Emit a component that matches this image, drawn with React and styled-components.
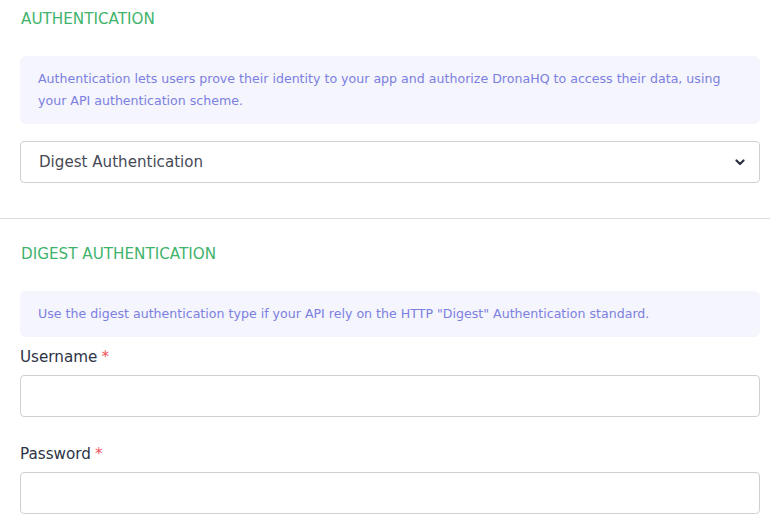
import React from 'react';
import styled, { createGlobalStyle } from 'styled-components';

const Global = createGlobalStyle`
  body {
    margin: 0;
    background: #ffffff;
    font-family: "DejaVu Sans", "Noto Sans", sans-serif;
  }
`

const Page = styled.div`
  width: 770px;
  padding-top: 9px;
`

const Section = styled.section`
  padding: 0 10px 0 20px;
  border-top: ${p => (p.divided ? '1px solid #dedede' : 'none')};
  padding-top: ${p => (p.divided ? '25px' : '0')};
  padding-bottom: ${p => (p.divided ? '0' : '35px')};
`

const Heading = styled.h2`
  margin: 0 0 27px 1px;
  font-size: 15.2px;
  line-height: 20px;
  font-weight: 400;
  color: #3fb36b;
`

const Note = styled.div`
  background: #f4f5fd;
  border-radius: 6px;
  padding: 12px 18px;
  font-size: 12.6px;
  line-height: 22px;
  color: #7d80e0;
`

const SelectBox = styled.div`
  margin-top: 17px;
  height: 42px;
  box-sizing: border-box;
  border: 1px solid #d0d0d0;
  border-radius: 4px;
  display: flex;
  align-items: center;
  justify-content: space-between;
  padding: 0 14px 0 18px;
  font-size: 15.1px;
  color: #464a55;
`

const Field = styled.div`
  margin-top: ${p => p.gap}px;
`

const Label = styled.label`
  display: block;
  font-size: 15.2px;
  line-height: 20px;
  color: #2c3345;
  margin-bottom: 8px;
`

const Star = styled.span`
  color: #f0505a;
  margin-left: 4px;
`

const Input = styled.input`
  display: block;
  width: 100%;
  height: 42px;
  box-sizing: border-box;
  border: 1px solid #d0d0d0;
  border-radius: 4px;
  outline: none;
`

const Chevron = () => (
  <svg width="10" height="7" viewBox="0 0 10 7">
    <path d="M1.5 1.5 L5 5 L8.5 1.5" fill="none" stroke="#2c3345" strokeWidth="2.2" strokeLinecap="round" strokeLinejoin="round" />
  </svg>
)

export default function App() {
  return (
    <Page>
      <Global />
      <Section>
        <Heading>AUTHENTICATION</Heading>
        <Note>
          Authentication lets users prove their identity to your app and authorize DronaHQ to access their data, using your API authentication scheme.
        </Note>
        <SelectBox>
          <span>Digest Authentication</span>
          <Chevron />
        </SelectBox>
      </Section>
      <Section divided>
        <Heading>DIGEST AUTHENTICATION</Heading>
        <Note>
          Use the digest authentication type if your API rely on the HTTP "Digest" Authentication standard.
        </Note>
        <Field gap={10}>
          <Label>Username<Star>*</Star></Label>
          <Input />
        </Field>
        <Field gap={27}>
          <Label>Password<Star>*</Star></Label>
          <Input />
        </Field>
      </Section>
    </Page>
  );
}
